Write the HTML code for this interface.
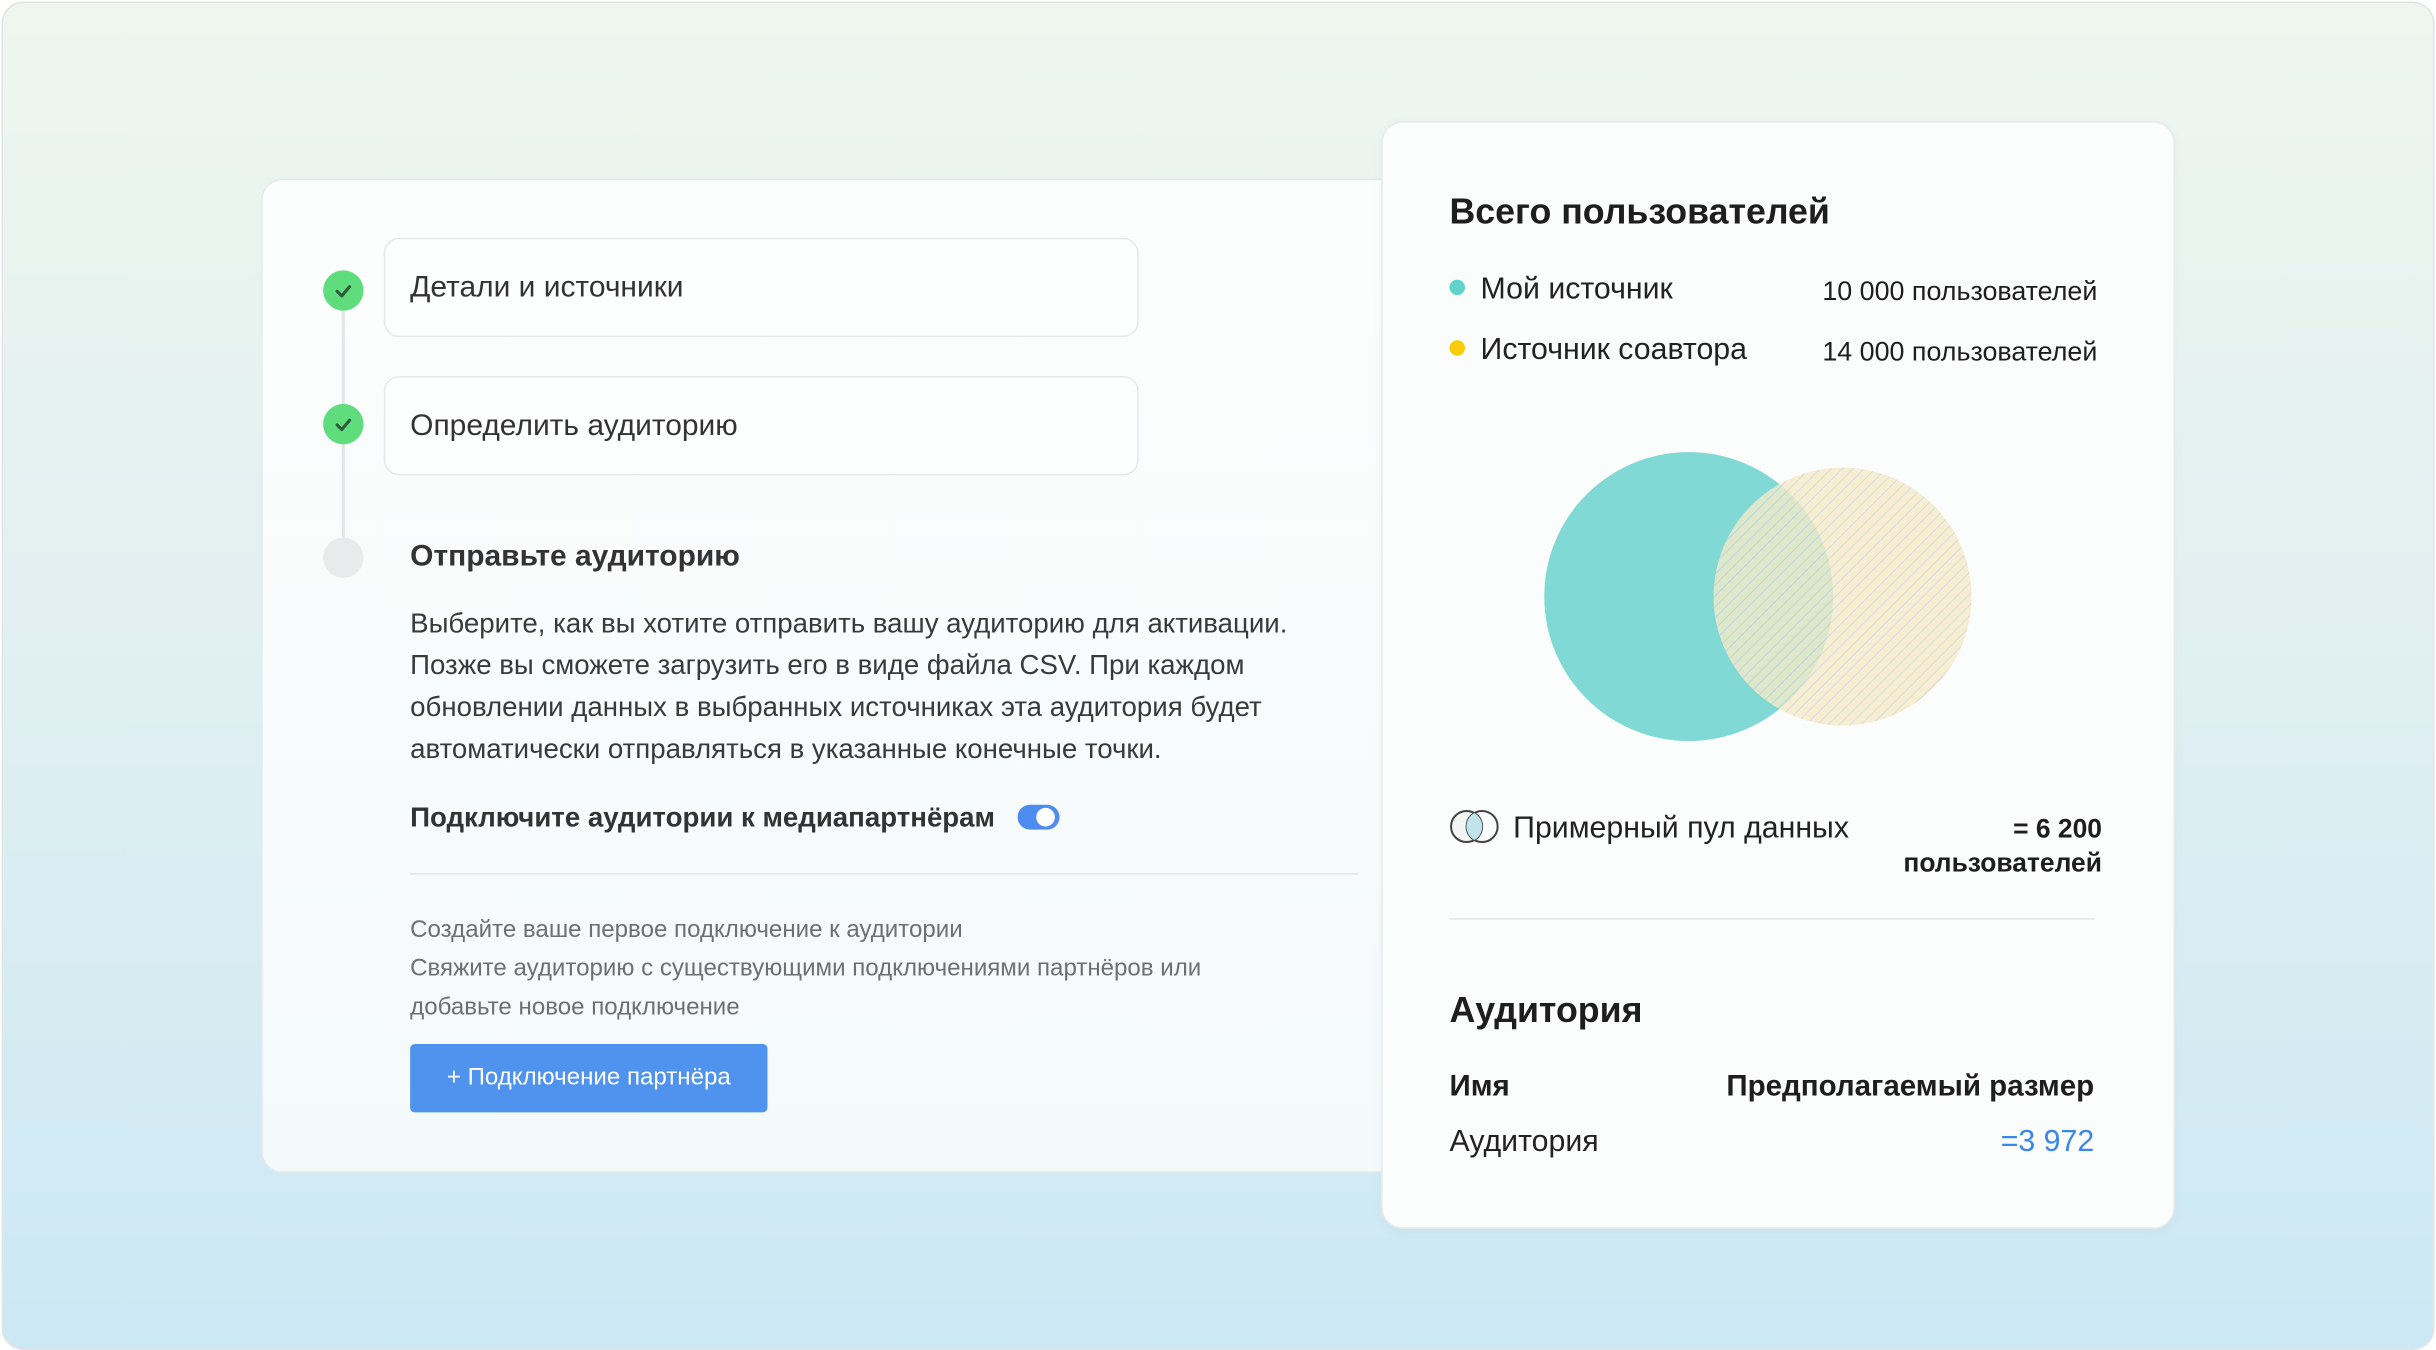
<!DOCTYPE html>
<html><head><meta charset="utf-8"><style>
html,body{margin:0;padding:0;width:2436px;height:1350px;overflow:hidden;background:#fff}
#s{position:absolute;left:0;top:0;width:1568px;height:869px;transform:scale(1.55357);transform-origin:0 0;font-family:"Liberation Sans",sans-serif;color:#222}
.frame{position:absolute;left:1px;top:1px;width:1564px;height:866px;border-radius:14px;border:1px solid #dfe5e5;background:linear-gradient(180deg,#eef6ee 0%,#e2f0f1 45%,#cce8f4 100%);overflow:hidden}
.abs{position:absolute}
.left{left:168px;top:115px;width:740px;height:638px;border-radius:14px;border:1px solid #e3eaec;background:linear-gradient(180deg,rgba(255,255,255,.88),rgba(250,252,253,.85))}
.right{left:889px;top:78px;width:509px;height:711px;border-radius:14px;border:1px solid #e6ecec;background:#fbfcfc;box-shadow:0 2px 8px rgba(0,0,0,.03)}
.dot{width:26px;height:26px;border-radius:50%;background:#5fdc7c}
.box{left:247px;width:484px;height:62px;border:1.5px solid #e6e9ea;border-radius:10px;background:#fdfefe}
.t19{font-size:19.3px;color:#333}
</style></head><body><div id="s"><div class="frame"></div>
<div class="abs left"></div>
<div class="abs" style="left:220px;top:200px;width:2px;height:150px;background:#e3e6e7"></div>
<div class="abs dot" style="left:208px;top:174px"></div>
<div class="abs dot" style="left:208px;top:260px"></div>
<svg class="abs" style="left:208px;top:174px" width="26" height="26"><path d="M9 13.5l3 3 5-6" stroke="#2d5a3c" stroke-width="2" fill="none" stroke-linecap="round" stroke-linejoin="round"/></svg>
<svg class="abs" style="left:208px;top:260px" width="26" height="26"><path d="M9 13.5l3 3 5-6" stroke="#2d5a3c" stroke-width="2" fill="none" stroke-linecap="round" stroke-linejoin="round"/></svg>
<div class="abs dot" style="left:208px;top:346px;background:#e8eaeb"></div>
<div class="abs box" style="top:153px"></div>
<div class="abs box" style="top:242px"></div>
<div class="abs t19" style="left:264px;top:175px">Детали и источники</div>
<div class="abs t19" style="left:264px;top:264px">Определить аудиторию</div>
<div class="abs" style="left:264px;top:348px;font-size:19.3px;font-weight:bold;color:#333">Отправьте аудиторию</div>
<div class="abs" style="left:264px;top:388px;font-size:17.8px;line-height:27px;color:#3a3a3a;width:590px">Выберите, как вы хотите отправить вашу аудиторию для активации. Позже вы сможете загрузить его в виде файла CSV. При каждом обновлении данных в выбранных источниках эта аудитория будет автоматически отправляться в указанные конечные точки.</div>
<div class="abs" style="left:264px;top:516px;font-size:17.8px;font-weight:bold;color:#333">Подключите аудитории к медиапартнёрам</div>
<div class="abs" style="left:655px;top:518px;width:27px;height:16px;border-radius:8px;background:#4d8df0"></div>
<div class="abs" style="left:667px;top:520px;width:12px;height:12px;border-radius:50%;background:#fff"></div>
<div class="abs" style="left:264px;top:562px;width:610px;height:1px;background:#e3e6e8"></div>
<div class="abs" style="left:264px;top:586px;font-size:15.5px;line-height:25px;color:#6d6f71;width:570px">Создайте ваше первое подключение к аудитории<br>Свяжите аудиторию с существующими подключениями партнёров или добавьте новое подключение</div>
<div class="abs" style="left:264px;top:672px;width:230px;height:44px;border-radius:3px;background:#4f93ef;color:#fff;font-size:15.5px;line-height:44px;text-align:center">+ Подключение партнёра</div>

<div class="abs right"></div>
<div class="abs" style="left:933px;top:123px;font-size:23px;font-weight:bold;color:#1e1e1e">Всего пользователей</div>
<div class="abs" style="left:933px;top:180px;width:10px;height:10px;border-radius:50%;background:#62d3cb"></div>
<div class="abs" style="left:933px;top:219px;width:10px;height:10px;border-radius:50%;background:#f7cd0a"></div>
<div class="abs" style="left:953px;top:175px;font-size:19.5px;color:#222">Мой источник</div>
<div class="abs" style="left:953px;top:214px;font-size:19.5px;color:#222">Источник соавтора</div>
<div class="abs" style="left:1173px;top:177px;font-size:17.3px;color:#1e1e1e">10 000 пользователей</div>
<div class="abs" style="left:1173px;top:216px;font-size:17.3px;color:#1e1e1e">14 000 пользователей</div>
<svg class="abs" style="left:990px;top:285px" width="290" height="200">
<defs><pattern id="h" width="5" height="5" patternUnits="userSpaceOnUse" patternTransform="rotate(45)"><rect width="5" height="5" fill="#f6ebc6"/><line x1="0" y1="0" x2="0" y2="5" stroke="#c8d3dc" stroke-width="1.2"/></pattern></defs>
<ellipse cx="97" cy="99" rx="93" ry="93" fill="#80d9d4"/>
<ellipse cx="196" cy="99" rx="83" ry="83" fill="url(#h)" opacity=".8"/>
</svg>
<svg class="abs" style="left:932px;top:520px" width="36" height="24"><circle cx="12" cy="12" r="10" fill="#f3f5f5" stroke="#444" stroke-width="1.3"/><circle cx="22" cy="12" r="10" fill="none" stroke="#444" stroke-width="1.3"/><path d="M17 3.3a10 10 0 0 1 0 17.4a10 10 0 0 1 0-17.4z" fill="#bfe4ec"/></svg>
<div class="abs" style="left:974px;top:522px;font-size:19.5px;color:#222">Примерный пул данных</div>
<div class="abs" style="left:1150px;top:523px;width:203px;text-align:right;font-size:17px;line-height:22px;font-weight:bold;color:#1e1e1e">= 6 200<br>пользователей</div>
<div class="abs" style="left:933px;top:591px;width:415px;height:1px;background:#e3e6e8"></div>
<div class="abs" style="left:933px;top:637px;font-size:23px;font-weight:bold;color:#1e1e1e">Аудитория</div>
<div class="abs" style="left:933px;top:689px;font-size:19px;font-weight:bold;color:#1e1e1e">Имя</div>
<div class="abs" style="left:1000px;top:689px;width:348px;text-align:right;font-size:19px;font-weight:bold;color:#1e1e1e">Предполагаемый размер</div>
<div class="abs" style="left:933px;top:724px;font-size:19.5px;color:#222">Аудитория</div>
<div class="abs" style="left:1200px;top:724px;width:148px;text-align:right;font-size:19.5px;color:#3a86ec">=3 972</div>
</div></body></html>
